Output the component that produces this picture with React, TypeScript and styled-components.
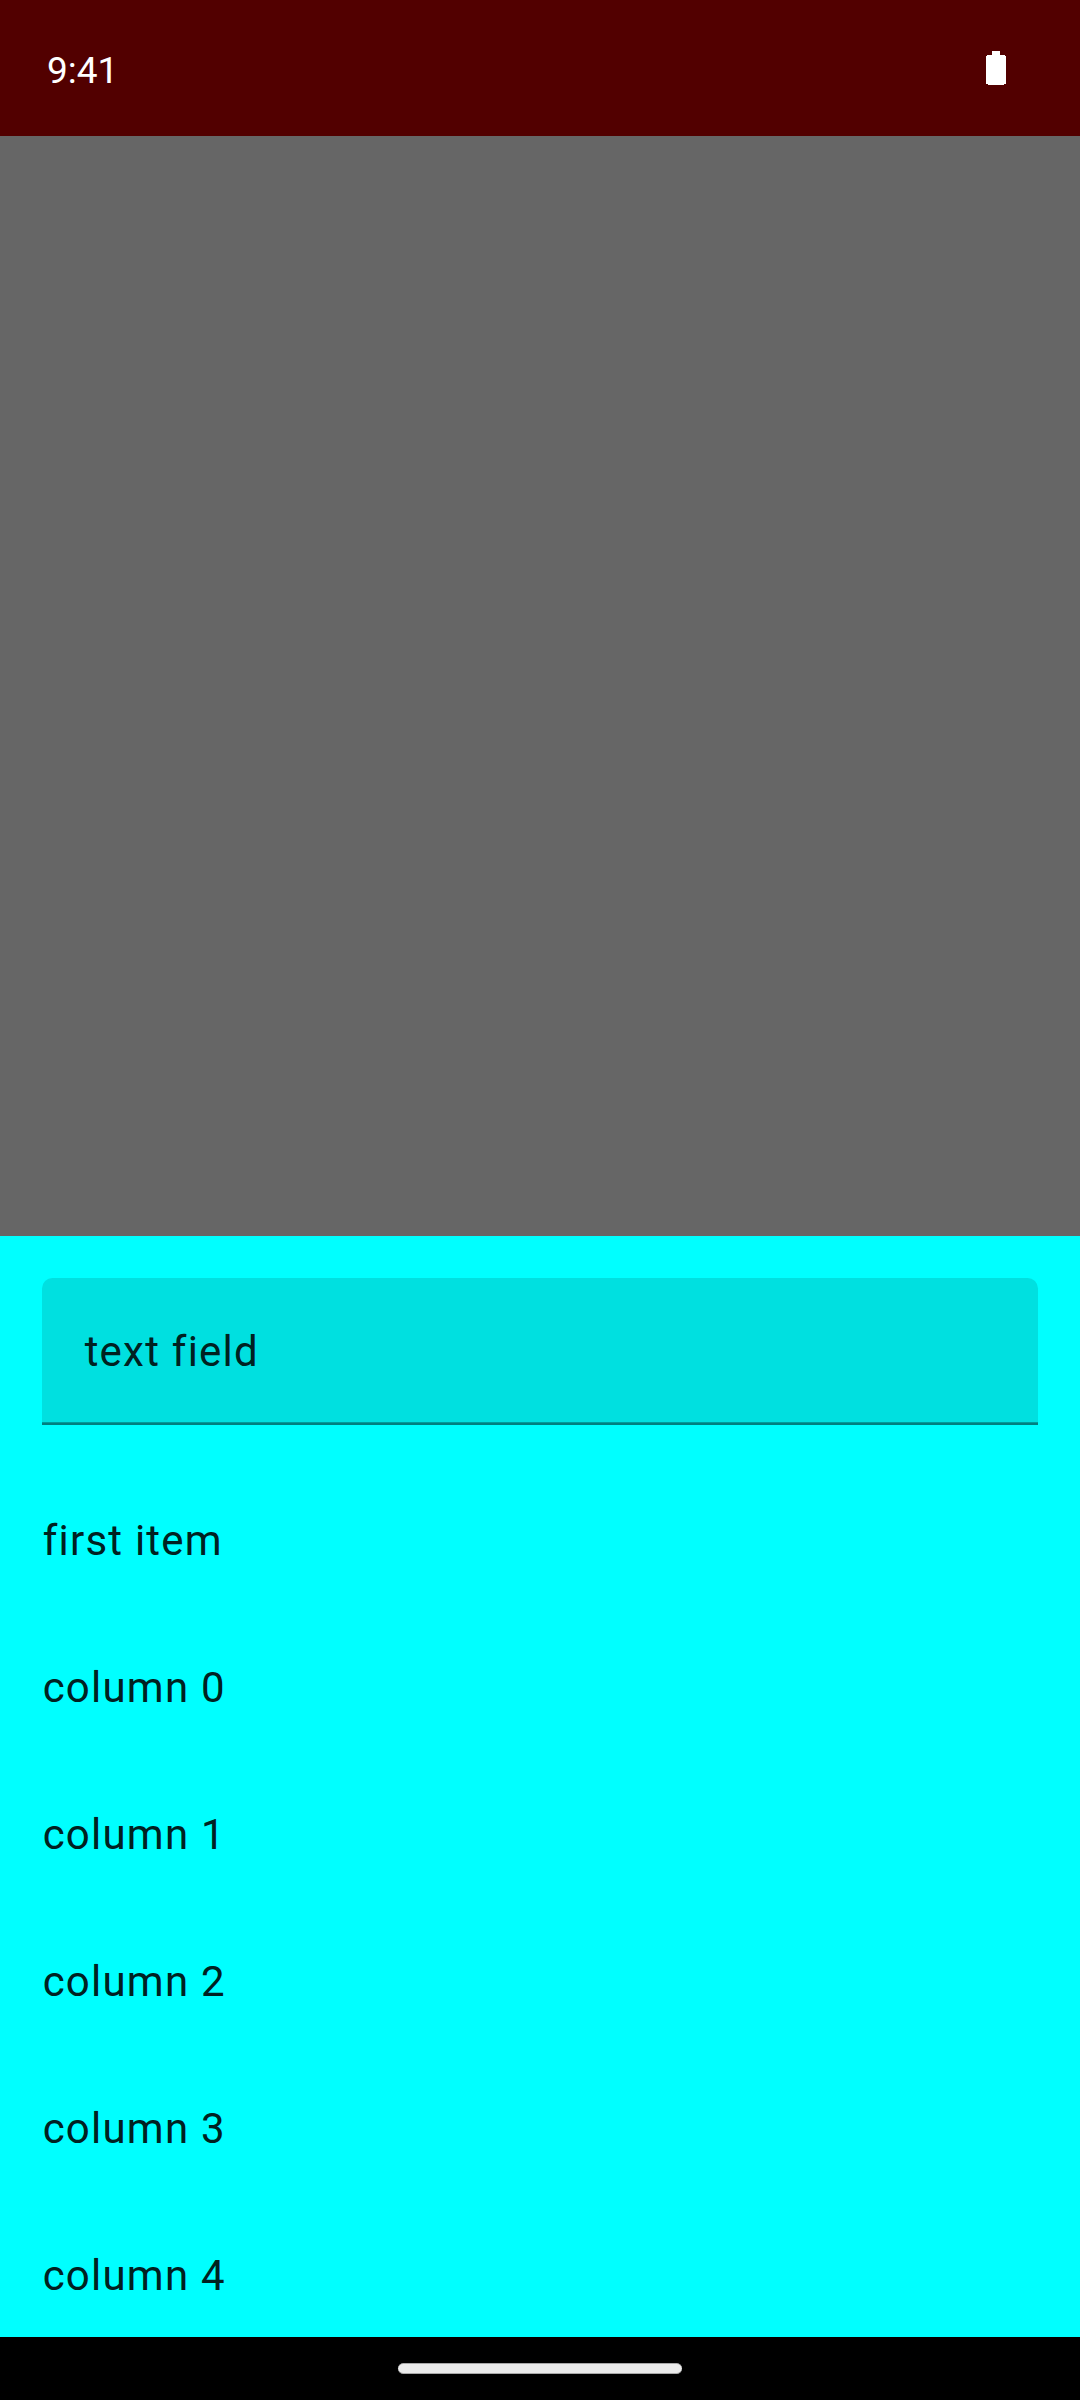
import React from "react";
import styled, { createGlobalStyle } from "styled-components";

const Global = createGlobalStyle`
  html, body { margin: 0; padding: 0; }
  * { box-sizing: border-box; }
`;
const Screen = styled.div`
  display: flex;
  flex-direction: column;
  width: 1080px;
  height: 2400px;
  background: #666666;
  font-family: Roboto, sans-serif;
`;
const StatusBar = styled.header`
  display: flex;
  justify-content: space-between;
  height: 136px;
  padding: 49px 74px 0 47px;
  background: #520000;
  color: #fff;
`;
const Clock = styled.span`
  font-size: 37px;
  line-height: 43px;
`;
const Battery = styled.svg`
  display: block;
  width: 20px;
  height: 34px;
  margin-top: 2px;
`;
const Scrim = styled.div`
  flex: 1;
`;
const Sheet = styled.section`
  height: 1101px;
  padding: 42px 42px 0;
  background: #00ffff;
  overflow: hidden;
`;
const Field = styled.div`
  display: flex;
  flex-direction: column;
  justify-content: space-between;
  height: 147px;
  padding-top: 42px;
  border-radius: 10.500px 10.500px 0 0;
  background: #00e0e0;
  overflow: hidden;
`;
const FieldText = styled.div`
  display: flex;
  padding: 0 42px;
`;
const Indicator = styled.div`
  height: 3px;
  border-top: 1px solid #009c9c;
  background: #008080;
`;
const Label = styled.span`
  padding-left: 0.656px;
  font-size: 42px;
  line-height: 63px;
  letter-spacing: 1.23px;
  color: #002121;
`;
const List = styled.ul`
  margin: 42px 0 0;
  padding: 0;
  list-style: none;
`;
const Row = styled.li`
  display: flex;
  align-items: center;
  height: 147px;
`;
const NavBar = styled.footer`
  display: flex;
  justify-content: center;
  align-items: center;
  height: 63px;
  background: #000;
`;
const Handle = styled.div`
  width: 284px;
  height: 11px;
  border: solid #a8a8a8;
  border-width: 1px 0;
  border-radius: 5.500px;
  background: #ebebeb;
`;

const items = ["first item", "column 0", "column 1", "column 2", "column 3", "column 4"];

export default function App() {
  return (
    <Screen>
      <Global />
      <StatusBar>
        <Clock>9:41</Clock>
        <Battery viewBox="0 0 20 34" fill="#fff" shapeRendering="crispEdges">
          <path d="M6 0h8v4h5v1h1v28h-2v1H2v-1H0V5h1V4h5z" />
        </Battery>
      </StatusBar>
      <Scrim />
      <Sheet>
        <Field>
          <FieldText><Label>text field</Label></FieldText>
          <Indicator />
        </Field>
        <List>
          {items.map((t) => <Row key={t}><Label>{t}</Label></Row>)}
        </List>
      </Sheet>
      <NavBar><Handle /></NavBar>
    </Screen>
  );
}
